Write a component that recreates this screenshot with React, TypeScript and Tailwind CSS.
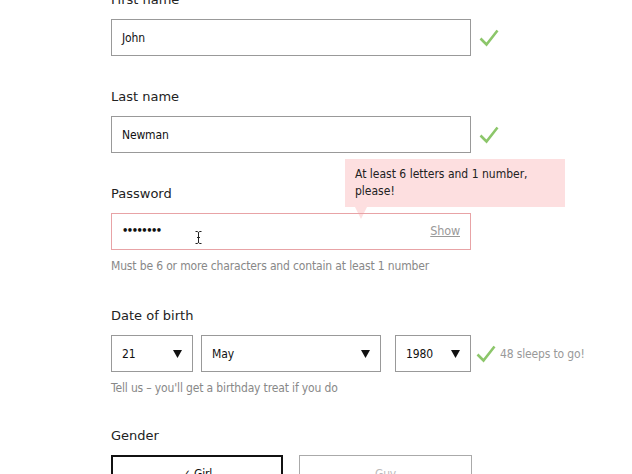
const label = "block text-[13px] leading-[18px] text-[#222] font-['DejaVu_Sans',Verdana,sans-serif] mb-[10px]";
const field = "font-['DejaVu_Sans_Condensed','Liberation_Sans',sans-serif] text-[12px] tracking-[-0.15px]";

function Check() {
  return (
    <svg width="20" height="18" viewBox="0 0 20 18" className="shrink-0">
      <path d="M1.5 9.5 L7.5 15.5 L18.5 1.5" fill="none" stroke="#8cc66a" strokeWidth="2.6" />
    </svg>
  );
}

function Arrow() {
  return (
    <svg width="9" height="8" viewBox="0 0 9 8">
      <path d="M0 0 H9 L4.5 8 Z" fill="#111" />
    </svg>
  );
}

function TextField({ value }: { value: string }) {
  return (
    <div className="flex items-center gap-[8px]">
      <div className={`w-[360px] h-[37px] border border-[#999] flex items-center px-[10px] text-[#111] ${field}`}>
        {value}
      </div>
      <Check />
    </div>
  );
}

function Select({ value, w }: { value: string; w: string }) {
  return (
    <div className={`${w} h-[37px] border border-[#999] flex items-center justify-between pl-[10px] pr-[10px] text-[#111] ${field}`}>
      <span>{value}</span>
      <Arrow />
    </div>
  );
}

export default function App() {
  return (
    <div className="w-[632px] h-[474px] overflow-hidden bg-white">
      <div className="ml-[111px] -mt-[9px] flex flex-col">
        <label className={label}>First name</label>
        <TextField value="John" />

        <label className={`${label} mt-[32px]`}>Last name</label>
        <TextField value="Newman" />

        <div className="relative mt-[32px]">
          <label className={label}>Password</label>
          <div className="absolute left-[234px] -top-[26px] w-[220px] bg-[#fddfe0] px-[10px] pt-[7px] pb-[7px] text-[12px] leading-[17px] text-[#222] font-['DejaVu_Sans_Condensed','Liberation_Sans',sans-serif]">
            At least 6 letters and 1 number, please!
            <div className="absolute left-[10px] -bottom-[12px] w-0 h-0 border-l-[6px] border-l-transparent border-r-[6px] border-r-transparent border-t-[12px] border-t-[#fddfe0]" />
          </div>
          <div className={`relative w-[360px] h-[37px] border border-[#e8a3a6] flex items-center justify-between px-[10px] ${field}`}>
            <span className="text-[#111] text-[11px] tracking-[-1.5px] font-bold">••••••••</span>
            <span className="text-[#999] underline text-[12.5px]">Show</span>
            <svg className="absolute left-[83px] top-[17px]" width="7" height="13" viewBox="0 0 7 13">
              <path d="M0.5 0.5 H2.5 Q3.5 1 3.5 2 V11 Q3.5 12 2.5 12.5 H0.5 M6.5 0.5 H4.5 Q3.5 1 3.5 2 M3.5 11 Q3.5 12 4.5 12.5 H6.5 M2 6.5 H5" fill="none" stroke="#222" strokeWidth="1" />
            </svg>
          </div>
        </div>
        <p className={`mt-[8px] leading-[16px] text-[#888] ${field}`}>
          Must be 6 or more characters and contain at least 1 number
        </p>

        <label className={`${label} mt-[33px]`}>Date of birth</label>
        <div className="flex items-center">
          <Select value="21" w="w-[82px]" />
          <div className="ml-[8px]"><Select value="May" w="w-[180px]" /></div>
          <div className="ml-[14px]"><Select value="1980" w="w-[76px]" /></div>
          <div className="ml-[5px] flex items-center gap-[4px]">
            <Check />
            <span className={`text-[#999] ${field}`}>48 sleeps to go!</span>
          </div>
        </div>
        <p className={`mt-[8px] leading-[16px] text-[#888] ${field}`}>
          Tell us – you'll get a birthday treat if you do
        </p>

        <label className={`${label} mt-[31px]`}>Gender</label>
        <div className="flex gap-[16px]">
          <div className={`w-[172px] h-[37px] border-2 border-[#111] flex items-center justify-center text-[#111] ${field}`}>
            ✓ Girl
          </div>
          <div className={`w-[173px] h-[37px] border border-[#aaa] flex items-center justify-center text-[#bbb] ${field}`}>
            Guy
          </div>
        </div>
      </div>
    </div>
  );
}
